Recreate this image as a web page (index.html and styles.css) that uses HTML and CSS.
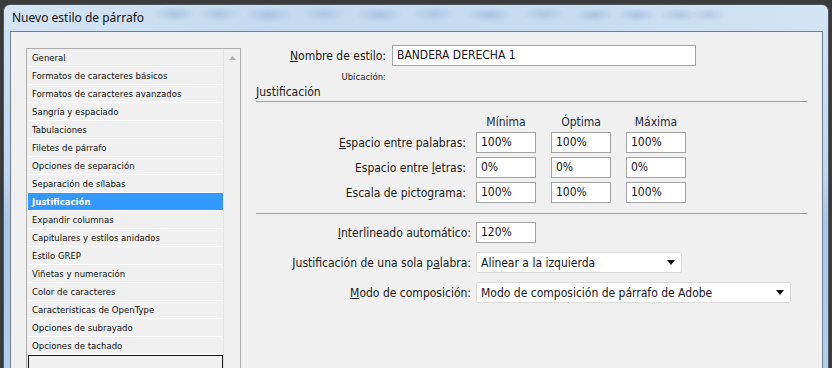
FILE: index.html
```html
<!DOCTYPE html>
<html>
<head>
  <title>Nuevo estilo de párrafo</title>
  <link rel="stylesheet" href="styles.css">
</head>
<body>

  <div class="window">
    <div class="title-bar">Nuevo estilo de párrafo</div>

    <div class="panel">
      <div class="category-list">
        <ul class="items">
          <li>General</li>
          <li>Formatos de caracteres básicos</li>
          <li>Formatos de caracteres avanzados</li>
          <li>Sangría y espaciado</li>
          <li>Tabulaciones</li>
          <li>Filetes de párrafo</li>
          <li>Opciones de separación</li>
          <li>Separación de sílabas</li>
          <li class="selected">Justificación</li>
          <li>Expandir columnas</li>
          <li>Capitulares y estilos anidados</li>
          <li>Estilo GREP</li>
          <li>Viñetas y numeración</li>
          <li>Color de caracteres</li>
          <li>Características de OpenType</li>
          <li>Opciones de subrayado</li>
          <li>Opciones de tachado</li>
          <li class="edit-slot"></li>
        </ul>
        <div class="scrollbar">
          <svg class="scroll-up" width="7" height="4" viewBox="0 0 7 4"><polygon points="0,4 7,4 3.5,0" fill="#b4b4b4"/></svg>
        </div>
      </div>

      <div class="settings">
        <div class="name-row">
          <label class="name-label"><u>N</u>ombre de estilo:</label>
          <div class="field name-field">BANDERA DERECHA 1</div>
        </div>
        <div class="location-row">
          <span class="small-label">Ubicación:</span>
        </div>

        <h3 class="section-title">Justificación</h3>

        <div class="spacing-grid">
          <span></span>
          <span class="col-head">Mínima</span>
          <span class="col-head">Óptima</span>
          <span class="col-head">Máxima</span>

          <label class="row-label"><u>E</u>spacio entre palabras:</label>
          <div class="field small-field">100%</div>
          <div class="field small-field">100%</div>
          <div class="field small-field">100%</div>

          <label class="row-label">Espacio entre <u>l</u>etras:</label>
          <div class="field small-field">0%</div>
          <div class="field small-field">0%</div>
          <div class="field small-field">0%</div>

          <label class="row-label">Escala de picto<u>g</u>rama:</label>
          <div class="field small-field">100%</div>
          <div class="field small-field">100%</div>
          <div class="field small-field">100%</div>
        </div>

        <div class="divider"></div>

        <div class="option-row">
          <label class="row-label"><u>I</u>nterlineado automático:</label>
          <div class="field small-field">120%</div>
        </div>
        <div class="option-row">
          <label class="row-label">Justificación de una sola p<u>a</u>labra:</label>
          <div class="dropdown word-dropdown">
            <span>Alinear a la izquierda</span>
            <svg width="8" height="5" viewBox="0 0 8 5"><polygon points="0,0 8,0 4,5" fill="#111"/></svg>
          </div>
        </div>
        <div class="option-row">
          <label class="row-label"><u>M</u>odo de composición:</label>
          <div class="dropdown mode-dropdown">
            <span>Modo de composición de párrafo de Adobe</span>
            <svg width="8" height="5" viewBox="0 0 8 5"><polygon points="0,0 8,0 4,5" fill="#111"/></svg>
          </div>
        </div>
      </div>
    </div>
  </div>

</body>
</html>
```

FILE: styles.css
```css
body {
  margin: 0;
  padding: 0;
  width: 832px;
  height: 368px;
  overflow: hidden;
  background-color: #3b3b3b;
  font-family: "DejaVu Sans", "Liberation Sans", sans-serif;
  font-stretch: condensed;
  color: #1a1a1a;
}

.window {
  box-sizing: border-box;
  margin: 4px 0 0 3px;
  width: 826px;
  height: 364px;
  border: 1px solid #4d5560;
  border-bottom: none;
  border-radius: 7px 7px 0 0;
  background: linear-gradient(#d3e3f3, #c3d8ef 45%, #a9c7ea 60%, #b3cfee);
  display: flex;
  flex-direction: column;
}

.title-bar {
  height: 26px;
  flex-shrink: 0;
  padding-left: 8px;
  line-height: 26px;
  font-family: "Noto Sans", sans-serif;
  font-stretch: normal;
  font-size: 12px;
  color: #111;
  border-radius: 7px 7px 0 0;
  background:
    radial-gradient(ellipse 22px 8px at 170px 9px, rgba(150, 180, 215, 0.6), transparent),
    radial-gradient(ellipse 22px 8px at 215px 9px, rgba(150, 180, 215, 0.5), transparent),
    radial-gradient(ellipse 24px 8px at 265px 10px, rgba(140, 172, 210, 0.5), transparent),
    radial-gradient(ellipse 22px 8px at 320px 9px, rgba(150, 180, 215, 0.5), transparent),
    radial-gradient(ellipse 24px 8px at 375px 10px, rgba(140, 172, 210, 0.5), transparent),
    radial-gradient(ellipse 22px 8px at 430px 9px, rgba(150, 180, 215, 0.5), transparent),
    radial-gradient(ellipse 24px 8px at 485px 10px, rgba(140, 172, 210, 0.5), transparent),
    radial-gradient(ellipse 22px 8px at 540px 9px, rgba(150, 180, 215, 0.5), transparent),
    radial-gradient(ellipse 20px 7px at 590px 10px, rgba(140, 172, 210, 0.5), transparent),
    radial-gradient(ellipse 20px 7px at 633px 10px, rgba(140, 172, 210, 0.5), transparent),
    radial-gradient(ellipse 20px 7px at 675px 10px, rgba(140, 172, 210, 0.45), transparent),
    radial-gradient(ellipse 18px 7px at 705px 10px, rgba(140, 172, 210, 0.4), transparent),
    linear-gradient(90deg, #d6e5f4, #c5daf0 30%, #c7dcf1 70%, #d4e4f4);
}

.panel {
  flex: 1;
  min-height: 0;
  overflow: hidden;
  margin: 0 5px 0 6px;
  border: 1px solid #6e7f92;
  border-bottom: none;
  background-color: #f0f0f0;
  display: flex;
  align-items: flex-start;
}

/* lista de categorias */

.category-list {
  margin: 16px 0 0 15px;
  width: 213px;
  height: 320px;
  border: 1px solid #adadad;
  border-bottom: none;
  background-color: #f0f0f0;
  display: flex;
  overflow: hidden;
}

.items {
  list-style: none;
  margin: 0;
  padding: 0 0 0 1px;
  width: 195px;
  font-size: 9.5px;
}

.items li {
  height: 17px;
  line-height: 17px;
  padding-left: 4px;
  border-bottom: 1px solid #ffffff;
  color: #111;
  white-space: nowrap;
}

.items li.selected {
  background-color: #3399ff;
  color: #ffffff;
  font-weight: bold;
}

.items li.edit-slot {
  height: 14px;
  border: 1px solid #111;
  border-bottom: none;
}

.scrollbar {
  width: 16px;
  border-left: 1px solid #e4e4e4;
  display: flex;
  justify-content: center;
  padding-top: 7px;
  align-items: flex-start;
}

/* ajustes */

.settings {
  margin: 13px 15px 0 15px;
  flex: 1;
  font-size: 12px;
}

.field {
  box-sizing: border-box;
  height: 21px;
  line-height: 19px;
  padding-left: 4px;
  background-color: #ffffff;
  border: 1px solid #a3a3a3;
  color: #141428;
  white-space: nowrap;
}

.name-row {
  display: flex;
  align-items: center;
}

.name-label {
  width: 130px;
  margin-right: 6px;
  text-align: right;
}

.name-field {
  width: 304px;
}

.location-row {
  width: 130px;
  margin-top: 4px;
  text-align: right;
  height: 12px;
  line-height: 12px;
}

.small-label {
  font-size: 9.5px;
}

.section-title {
  margin: 3px 0 0 0;
  padding-bottom: 1px;
  font-size: 12px;
  font-weight: normal;
  line-height: 15px;
  border-bottom: 1px solid #a0a0a0;
}

.spacing-grid {
  margin-top: 13px;
  display: grid;
  grid-template-columns: 215px 65px 75px 75px;
  grid-template-rows: 13px 21px 21px 21px;
  row-gap: 4px;
  align-items: center;
}

.spacing-grid > * {
  justify-self: end;
}

.spacing-grid .row-label {
  margin-right: 5px;
}

.col-head {
  width: 60px;
  text-align: center;
  color: #1c2840;
}

.small-field {
  width: 60px;
}

.divider {
  margin-top: 10px;
  border-bottom: 1px solid #a0a0a0;
}

.option-row {
  margin-top: 8px;
  display: flex;
  align-items: center;
}

.option-row + .option-row {
  margin-top: 9px;
}

.option-row .row-label {
  width: 215px;
  margin-right: 5px;
  text-align: right;
}

.dropdown {
  box-sizing: border-box;
  height: 21px;
  padding: 0 6px 0 4px;
  background-color: #ffffff;
  border: 1px solid #dadada;
  border-radius: 2px;
  display: flex;
  align-items: center;
  justify-content: space-between;
  color: #141428;
}

.word-dropdown {
  width: 206px;
}

.mode-dropdown {
  width: 315px;
}
```
